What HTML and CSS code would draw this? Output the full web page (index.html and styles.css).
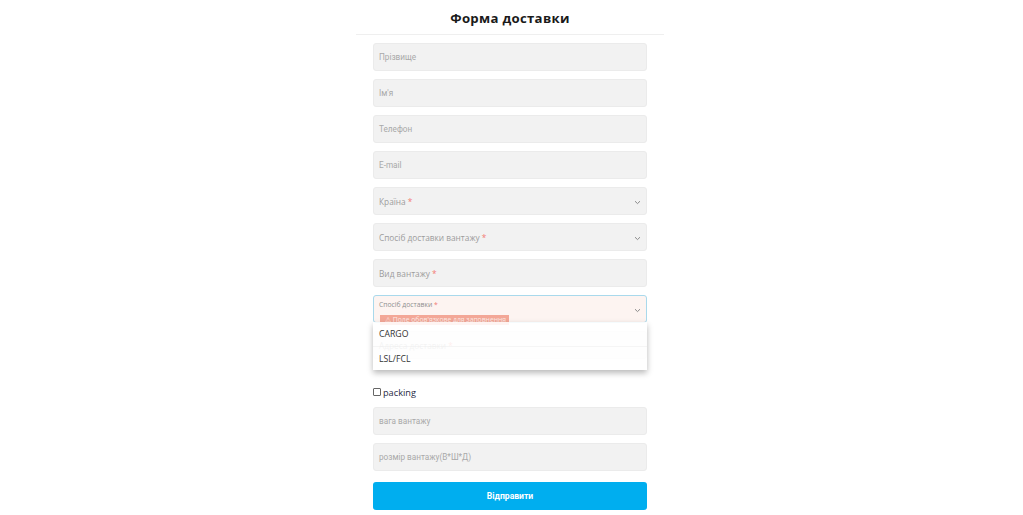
FILE: index.html
```html
<!DOCTYPE html>
<html lang="uk">
<head>
<meta charset="utf-8">
<title>Форма доставки</title>
<link rel="stylesheet" href="styles.css">
</head>
<body>
<div class="page">
  <h1 class="title">Форма доставки</h1>
  <form class="form">
    <div class="field"><span class="ph ph-r">Прізвище</span></div>
    <div class="field"><span class="ph ph-r">Ім'я</span></div>
    <div class="field"><span class="ph ph-r">Телефон</span></div>
    <div class="field"><span class="ph ph-r">E-mail</span></div>
    <div class="field select"><span class="ph">Країна <b class="req">*</b></span><span class="chev"><svg width="7" height="5" viewBox="0 0 7 5"><path d="M1 1.2 L3.5 3.6 L6 1.2" fill="none" stroke="#8a8a8a" stroke-width="1"/></svg></span></div>
    <div class="field select"><span class="ph">Спосіб доставки вантажу <b class="req">*</b></span><span class="chev"><svg width="7" height="5" viewBox="0 0 7 5"><path d="M1 1.2 L3.5 3.6 L6 1.2" fill="none" stroke="#8a8a8a" stroke-width="1"/></svg></span></div>
    <div class="field"><span class="ph">Вид вантажу <b class="req">*</b></span></div>
    <div class="field select active">
      <span class="label">Спосіб доставки <b class="req">*</b></span>
      <span class="chev"><svg width="7" height="5" viewBox="0 0 7 5"><path d="M1 1.2 L3.5 3.6 L6 1.2" fill="none" stroke="#8a8a8a" stroke-width="1"/></svg></span>
      <span class="error">⚠ Поле обов'язкове для заповнення</span>
      <ul class="menu">
        <li class="opt">CARGO</li>
        <li class="opt">LSL/FCL</li>
      </ul>
    </div>
    <div class="field"><span class="ph">Адреса доставки <b class="req">*</b></span></div>
    <label class="check"><span class="box"></span>packing</label>
    <div class="field"><span class="ph ph-r">вага вантажу</span></div>
    <div class="field"><span class="ph ph-r">розмір вантажу(В*Ш*Д)</span></div>
    <div class="submit">Відправити</div>
  </form>
</div>
</body>
</html>
```
FILE: styles.css
```css
* { box-sizing: border-box; }
body {
  margin: 0;
  background: #fff;
  font-family: "Open Sans", "Noto Sans", sans-serif;
}
.page {
  width: 308px;
  margin-left: calc(50% - 155.5px);
}
.title {
  margin: 0;
  height: 35px;
  line-height: 36px;
  font-size: 13.2px;
  font-weight: 700;
  text-align: center;
  color: #1a1a1a;
  border-bottom: 1px solid #efefef;
  letter-spacing: 0.3px;
}
.form {
  display: flex;
  flex-direction: column;
  gap: 8px;
  padding: 8px 17px 0;
  margin: 0;
}
.field {
  position: relative;
  height: 28px;
  background: #f2f2f2;
  border: 1px solid #ebebeb;
  border-radius: 3px;
  display: flex;
  align-items: center;
  padding-left: 5px;
}
.ph {
  font-size: 8.3px;
  color: #9c9c9c;
}
.ph-r {
  font-family: Roboto, "Liberation Sans", sans-serif;
  font-size: 8.2px;
  color: #a9a9a9;
}
.req {
  font-weight: 400;
  color: #f27b74;
}
.chev {
  position: absolute;
  right: 5px;
  top: 11px;
  line-height: 0;
}
.active {
  background: #fdf4f1;
  border-color: #a9d9ec;
  align-items: flex-start;
}
.label {
  font-size: 6.8px;
  color: #8f8f8f;
  margin-top: 4px;
}
.error {
  position: absolute;
  left: 6px;
  top: 19px;
  height: 10px;
  padding: 0 3px 0 5px;
  background: #f3a797;
  color: #fde9e4;
  font-size: 6.8px;
  line-height: 10px;
  white-space: nowrap;
}
.menu {
  position: absolute;
  left: -1px;
  right: -1px;
  top: 26px;
  margin: 0;
  padding: 0;
  list-style: none;
  background: rgba(255, 255, 255, 0.88);
  box-shadow: 0 3px 6px rgba(0, 0, 0, 0.28);
  z-index: 2;
}
.opt {
  height: 24px;
  line-height: 24px;
  padding-left: 6px;
  font-size: 8.7px;
  color: #333;
}
.opt + .opt {
  border-top: 1px solid rgba(235, 235, 235, 0.5);
}
.check {
  display: flex;
  align-items: center;
  height: 14px;
  margin-top: 18px;
  font-size: 9.2px;
  color: #1f2a44;
}
.box {
  width: 8px;
  height: 8px;
  border: 1px solid #666;
  border-radius: 1px;
  background: #fff;
  margin-right: 2px;
}
.submit {
  margin-top: 3px;
  height: 28px;
  background: #00aeef;
  border-radius: 3px;
  color: #fff;
  font-family: Roboto, "Liberation Sans", sans-serif;
  font-weight: 700;
  font-size: 8.6px;
  display: flex;
  align-items: center;
  justify-content: center;
}
```
